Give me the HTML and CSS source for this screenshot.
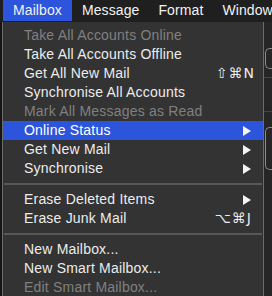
FILE: index.html
```html
<!DOCTYPE html>
<html lang="en">
<head>
    <meta charset="UTF-8">
    <title>Mailbox menu</title>
    <link rel="stylesheet" href="styles.css">
</head>
<body>
<div class="menubar">
    <div class="bar-item active">Mailbox</div>
    <div class="bar-item">Message</div>
    <div class="bar-item">Format</div>
    <div class="bar-item">Window</div>
</div>

<div class="stage">
    <div class="side left"></div>

    <ul class="menu">
        <li class="row disabled">Take All Accounts Online</li>
        <li class="row">Take All Accounts Offline</li>
        <li class="row">Get All New Mail <span class="key">⇧⌘N</span></li>
        <li class="row">Synchronise All Accounts</li>
        <li class="row disabled">Mark All Messages as Read</li>
        <li class="row selected">Online Status <span class="arrow"></span></li>
        <li class="row">Get New Mail <span class="arrow"></span></li>
        <li class="row">Synchronise <span class="arrow"></span></li>
        <li class="sep"></li>
        <li class="row">Erase Deleted Items <span class="arrow"></span></li>
        <li class="row">Erase Junk Mail <span class="key alt">⌥⌘J</span></li>
        <li class="sep"></li>
        <li class="row">New Mailbox...</li>
        <li class="row">New Smart Mailbox...</li>
        <li class="row disabled">Edit Smart Mailbox...</li>
    </ul>

    <div class="side right">
        <div class="win-box top"></div>
        <div class="win-line"></div>
        <div class="win-line"></div>
        <div class="win-box bottom"></div>
    </div>
</div>
</body>
</html>
```

FILE: styles.css
```css
html, body{
    margin: 0;
    padding: 0;
}
body{
    width: 272px;
    height: 296px;
    overflow: hidden;
    background: #1c1c1c;
    font-family: "Liberation Sans", Arial, sans-serif;
    font-size: 14px;
    color: #ececec;
}

.menubar{
    display: flex;
    height: 22px;
    padding-left: 3px;
    background: #1f1f1f;
}
.bar-item{
    padding: 0 9px 0 10px;
    line-height: 21px;
    height: 21px;
    color: #f2f2f2;
    letter-spacing: 0.1px;
}
.bar-item.active{
    background: #2c55dc;
    padding-right: 10px;
}

.stage{
    display: flex;
    height: 274px;
}
.side.left{
    width: 2px;
    background: #151515;
}
.side.right{
    flex: 1;
    background: #262626;
    padding-top: 26px;
    display: flex;
    flex-direction: column;
}

.menu{
    list-style: none;
    margin: 0;
    width: 262px;
    padding: 4px 0 0 0;
    background: #333333;
    border-left: 1px solid #6b6b6b;
    border-right: 1px solid #6b6b6b;
}
.row{
    display: flex;
    align-items: center;
    height: 19px;
    line-height: 19px;
    padding: 0 8px 0 21px;
    white-space: nowrap;
    letter-spacing: 0.2px;
}
.row.disabled{
    color: #808080;
}
.row.selected{
    background: #2c55dc;
    color: #ffffff;
}
.key{
    margin-left: auto;
    font-family: "DejaVu Sans", sans-serif;
    font-size: 14px;
    letter-spacing: 1px;
}
.key.alt{
    margin-right: 3px;
}
.arrow{
    margin-left: auto;
    margin-right: 4px;
    width: 0;
    height: 0;
    border-top: 5px solid transparent;
    border-bottom: 5px solid transparent;
    border-left: 8px solid #f4f4f4;
}
.sep{
    height: 12px;
    display: flex;
    align-items: center;
}
.sep::before{
    content: "";
    flex: 1;
    margin: 0 1px;
    height: 2px;
    background: #575757;
}

.win-box{
    width: 6px;
    margin-left: 1px;
    border: 1px solid #8a8a8a;
    border-right: none;
    border-radius: 5px 0 0 5px;
}
.win-box.top{
    height: 19px;
}
.win-line{
    height: 1px;
    background: #444;
    margin-top: 8px;
}
.win-line + .win-line{
    margin-top: 33px;
}
.win-box.bottom{
    height: 41px;
    margin-top: 15px;
}
```
